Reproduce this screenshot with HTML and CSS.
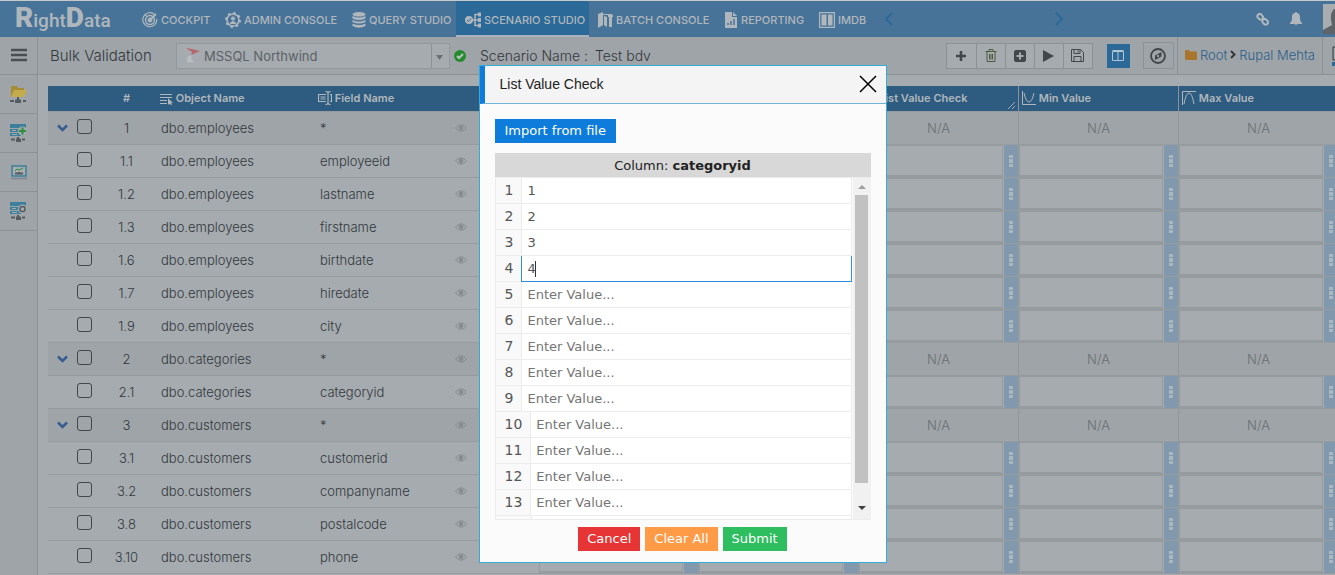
FILE: index.html
```html
<!DOCTYPE html>
<html lang="en">
<head>
<meta charset="utf-8">
<title>RightData - Bulk Validation</title>
<link rel="stylesheet" href="styles.css">
</head>
<body>
<header class="topbar">
  <div class="logo"><b>R</b><span>ight</span><b>D</b><span>ata</span></div>
  <nav class="nav">
    <a href="#"><svg width="16" height="16" viewBox="0 0 16 16" fill="none" stroke="currentColor"><path d="M13 3a7 7 0 1 0 1.8 4M3 2.500l1.500 1.500" stroke-width="1.200"/><circle cx="8" cy="8" r="4.500" stroke-width="1.400"/><circle cx="8" cy="8" r="2" fill="currentColor"/><path d="M8 8l6-6" stroke-width="1.800"/></svg>COCKPIT</a>
    <a href="#"><svg width="16" height="16" viewBox="0 0 16 16" fill="none" stroke="currentColor"><circle cx="8" cy="8" r="6" stroke-width="1.600"/><circle cx="8" cy="8" r="7" stroke-width="2" stroke-dasharray="2.500 3"/><circle cx="8" cy="6.500" r="1.600" fill="currentColor"/><path d="M5 11.500q3-4 6 0z" fill="currentColor"/></svg>ADMIN CONSOLE</a>
    <a href="#"><svg width="14" height="16" viewBox="0 0 14 16" fill="currentColor"><ellipse cx="7" cy="2.300" rx="6.500" ry="2.300"/><path d="M.5 4q6.500 3 13 0v2.500q-6.500 3-13 0zM.5 8q6.500 3 13 0v2q-6.500 3-13 0zM.5 11.500q6.500 3 13 0v2.500q-6.500 3.500-13 0z"/></svg>QUERY STUDIO</a>
    <a href="#" class="active"><svg width="16" height="16" viewBox="0 0 16 16" fill="none" stroke="currentColor"><circle cx="4" cy="8" r="4" fill="currentColor" stroke="none"/><path d="M2 8l1.500 1.500L6 6.500" stroke="#2b6998"/><path d="M8 8h6M14 2.500h-4v11h4" stroke-width="1.500"/><path d="M13 .5h3v4h-3zM13 6h3v4h-3zM13 11.500h3v4h-3z" fill="currentColor" stroke="none"/></svg>SCENARIO STUDIO</a>
    <a href="#"><svg width="15" height="16" viewBox="0 0 15 16" fill="currentColor"><path d="M0 2l5-2v13l-5 3zM6 4l3 1v10l-3-2zM10 3h5v2h-1v10h-3V5h-1z"/><path d="M5 2.500h9" stroke="currentColor"/></svg>BATCH CONSOLE</a>
    <a href="#"><svg width="14" height="16" viewBox="0 0 14 16"><path fill="currentColor" d="M1 0h7v5h5v11H1zM9 0l4 4H9z"/><path d="M4 13v-2M7 13V9M10 13V7" stroke="#487398" stroke-width="1.500"/></svg>REPORTING</a>
    <a href="#"><svg width="16" height="16" viewBox="0 0 16 16"><path fill="none" stroke="currentColor" stroke-width="1.200" d="M.6.600h14.800v14.800H.600z"/><path fill="currentColor" d="M2.500 2.500h5v11h-5zM9 2.500h4.500v11H9z"/></svg>IMDB</a>
  </nav>
  <button class="pager" aria-label="Previous"><svg width="8" height="14" viewBox="0 0 8 14"><path d="M7 1L1 7l6 6"/></svg></button>
  <button class="pager next" aria-label="Next"><svg width="8" height="14" viewBox="0 0 8 14"><path d="M1 1l6 6-6 6"/></svg></button>
  <div class="tools">
    <button aria-label="Links"><svg width="13" height="13" viewBox="0 0 13 13" fill="none" stroke="currentColor" stroke-width="2"><rect x="1" y="1.500" width="6" height="4.500" rx="2.200" transform="rotate(45 4 4)"/><rect x="6" y="6.500" width="6" height="4.500" rx="2.200" transform="rotate(45 9 9)"/></svg></button>
    <button aria-label="Notifications"><svg width="14" height="14" viewBox="0 0 14 14" fill="currentColor"><path d="M7 0c1 0 1 1 1 1 3 .5 3 3 3 5 0 3 1 4 2 5v1H1v-1c1-1 2-2 2-5 0-2 0-4.500 3-5 0 0 0-1 1-1zM5.500 12.500h3q-1.500 2-3 0z"/></svg></button>
    <span class="avatar"><svg width="30" height="30" viewBox="0 0 30 30"><path fill="#5d6367" d="M0 30v-4l9-5q-3-11 2-16h8v25z"/></svg></span>
  </div>
</header>

<div class="shell">
  <aside class="rail">
    <button class="menu" aria-label="Menu"><svg width="16" height="14" viewBox="0 0 16 14"><path d="M0 2h16M0 7h16M0 12h16" stroke="#4a4f53" stroke-width="2.500"/></svg></button>
    <button aria-label="Connections"><svg width="17" height="19" viewBox="0 0 17 19"><path fill="#a58c35" d="M1 1h6l1 2h6v8H1z"/><path fill="#c4ab4c" d="M4 5h13l-3 7H1z"/><path d="M0 16h4M13 16h3" stroke="#555b60" stroke-width="2"/><path fill="#555b60" d="M5 18v-3l2-1v-2h2v2l2 1v3z"/></svg></button>
    <button aria-label="Add source"><svg width="17" height="18" viewBox="0 0 17 18"><path fill="#3c809c" d="M0 0h16v4H0zM0 5h9v3H0zM0 9h11v3H0z"/><path d="M2 6.500h4M2 10.500h5" stroke="#a5abaf"/><circle cx="12.500" cy="7" r="4.500" fill="#a5abaf"/><path d="M12.500 3.500v7M9 7h7" stroke="#2d8e3c" stroke-width="2"/><path d="M1 15.500h4M12 15.500h3" stroke="#555b60" stroke-width="2"/><path fill="#555b60" d="M6 18v-3l1-1v-1h2v1l2 1v3z"/></svg></button>
    <button aria-label="Profile"><svg width="16" height="15" viewBox="0 0 16 15"><path d="M1 1h14v10H1z" fill="#a5abaf" stroke="#3c809c" stroke-width="1.500"/><path d="M0 13.500h16" stroke="#7d878d" stroke-width="1.500"/><path d="M4 6l2-2 2 1 4-2" stroke="#2d8e3c" fill="none"/><path d="M4 8.500h8M7 8h2" stroke="#555b60" stroke-width="2"/></svg></button>
    <button aria-label="Source settings"><svg width="17" height="18" viewBox="0 0 17 18"><path fill="#3c809c" d="M0 0h16v4H0zM0 5h9v3H0zM0 9h11v3H0z"/><path d="M2 6.500h4M2 10.500h5" stroke="#a5abaf"/><circle cx="12.500" cy="7" r="4.500" fill="#a5abaf"/><circle cx="12.500" cy="7" r="2.600" fill="none" stroke="#555b60" stroke-width="1.500"/><path d="M1 15.500h4M12 15.500h3" stroke="#555b60" stroke-width="2"/><path fill="#555b60" d="M6 18v-3l1-1v-1h2v1l2 1v3z"/></svg></button>
  </aside>

  <main class="main">
    <div class="toolbar">
      <h1>Bulk Validation</h1>
      <div class="source">
        <svg class="source-icon" width="16" height="16" viewBox="0 0 16 16"><path fill="#b5686c" d="M1 1l6 1 8 2-7 3-2 2 1-4z"/><path fill="#b9bdc0" d="M3 9l5-1-2 3 3 4-6 1q-2-3 0-7z"/></svg>
        <select aria-label="Data source"><option>MSSQL Northwind</option></select>
        <svg class="source-arrow" width="7" height="5" viewBox="0 0 7 5"><path fill="#6a7074" d="M0 0h7L3.500 5z"/></svg>
      </div>
      <svg class="ok" width="12" height="12" viewBox="0 0 12 12"><circle cx="6" cy="6" r="6" fill="#258b2f"/><path d="M3 6l2 2 4-4" fill="none" stroke="#b9c3bc" stroke-width="2"/></svg>
      <p class="scenario"><span>Scenario Name :</span><span>Test bdv</span></p>
      <div class="actions">
        <div class="group">
          <button aria-label="Add"><svg width="12" height="12" viewBox="0 0 12 12"><path d="M6 1v10M1 6h10" stroke="currentColor" stroke-width="2.500"/></svg></button>
          <button aria-label="Delete"><svg width="12" height="13" viewBox="0 0 12 13" fill="none" stroke="#4f5a40"><path d="M.5 2.500h11M4 2V.500h4V2M2 3v9.500h8V3M4.500 5v5.500M6 5v5.500M7.500 5v5.500"/></svg></button>
          <button aria-label="Add box"><svg width="12" height="12" viewBox="0 0 12 12"><rect width="12" height="12" rx="2" fill="currentColor"/><path d="M6 2.500v7M2.500 6h7" stroke="#a5abaf" stroke-width="2"/></svg></button>
          <button aria-label="Run"><svg width="11" height="12" viewBox="0 0 11 12"><path fill="currentColor" d="M0 0l11 6-11 6z"/></svg></button>
          <button aria-label="Save"><svg width="13" height="13" viewBox="0 0 13 13" fill="none" stroke="currentColor"><path d="M.5.500h9l3 3v9H.500zM3 .5v4h6v-4M3 12V7.500h7V12M7 1.500v2"/></svg></button>
        </div>
        <button class="split" aria-label="Columns"><svg width="12" height="11" viewBox="0 0 12 11"><path fill="none" stroke="#b3c3cf" d="M.5 1.500h11v9H.500zM6 1v9M.5.500h11"/></svg></button>
        <button class="compass" aria-label="Explore"><svg width="16" height="16" viewBox="0 0 16 16"><circle cx="8" cy="8" r="7" fill="none" stroke="currentColor" stroke-width="1.800"/><path fill="currentColor" fill-rule="evenodd" d="M11.500 4v4.500L5 12V7.500zM8 6.800a1.200 1.200 0 1 0 .01 0z"/></svg></button>
        <div class="crumbs">
          <svg width="12" height="10" viewBox="0 0 12 10"><path fill="#a9742b" d="M0 1q0-1 1-1h3l1 1.500h6q1 0 1 1V9q0 1-1 1H1q-1 0-1-1z"/></svg>
          <a href="#">Root</a>
          <svg width="6" height="9" viewBox="0 0 6 9"><path d="M1 1l3.500 3.500L1 8" fill="none" stroke="#33383c" stroke-width="2"/></svg>
          <a href="#">Rupal Mehta</a>
        </div>
        <button class="edge" aria-label="Display"><svg width="18" height="20" viewBox="0 0 18 20" fill="none"><path d="M1 1h17M1 1v13h17M4 4h14" stroke="#33383c"/><path d="M0 17h18M0 19h6" stroke="#2b6998" stroke-width="2"/></svg></button>
      </div>
    </div>

    <div class="grid-wrap">
      <table class="grid">
        <colgroup><col class="c-check"><col class="c-num"><col class="c-object"><col class="c-field"><col class="c-eye"><col class="c-gap"><col class="c-value" span="5"></colgroup>
        <thead>
          <tr>
            <th></th>
            <th class="num">#</th>
            <th class="object"><svg width="13" height="12" viewBox="0 0 13 12"><path d="M0 1.500h12M0 4.500h12M0 7.500h7M0 10.500h7" stroke="currentColor"/><path fill="currentColor" d="M8 5l5 5-2 .2 1 2-1 .5-1-2-2 1z"/></svg> Object Name</th>
            <th colspan="2"><svg width="14" height="14" viewBox="0 0 14 14" fill="none" stroke="currentColor"><path d="M8 3.500H.500v7H8M12 3.500h1.500v7H12M2.500 6h5M2.500 8h5M10 2v10M7.500.500Q10 .5 10 2q0-1.500 2.500-1.500M7.500 13.500q2.500 0 2.500-1.500 0 1.500 2.500 1.500" stroke-width="1.200"/></svg> Field Name</th>
            <th></th>
            <th class="value"></th>
            <th class="value"></th>
            <th class="value"><span class="pad">List Value Check</span><svg class="grip" width="9" height="9" viewBox="0 0 9 9"><path d="M1 8l7-7M5 8l3-3" stroke="#a5abaf"/></svg></th>
            <th class="value"><svg width="14" height="14" viewBox="0 0 14 14" fill="none" stroke="currentColor"><path d="M.5 0v13.500H14M2 2q2 9 5 9t5-9" /></svg> Min Value</th>
            <th class="value"><svg width="14" height="14" viewBox="0 0 14 14" fill="none" stroke="currentColor"><path d="M.5 14V.500H14M2 13Q4 2 7 2t5 11"/></svg> Max Value</th>
          </tr>
        </thead>
        <tbody id="rows"></tbody>
      </table>
    </div>
  </main>
</div>

<section class="modal" role="dialog" aria-labelledby="modal-title">
  <header class="modal-head">
    <h2 id="modal-title">List Value Check</h2>
    <button aria-label="Close"><svg width="18" height="18" viewBox="0 0 18 18"><path d="M1 1l16 16M17 1L1 17" stroke="#000" stroke-width="1.500"/></svg></button>
  </header>
  <div class="modal-body">
    <button class="btn import">Import from file</button>
    <div class="list-title">Column: <b>categoryid</b></div>
    <div class="list">
      <div class="entries" id="entries"></div>
      <div class="scrollbar">
        <svg width="8" height="5" viewBox="0 0 8 5"><path fill="#a0a0a0" d="M0 4h8L4 0z"/></svg>
        <div class="thumb"></div>
        <svg class="down" width="8" height="5" viewBox="0 0 8 5"><path fill="#404040" d="M0 0h8L4 4z"/></svg>
      </div>
    </div>
    <div class="buttons">
      <button class="btn cancel">Cancel</button>
      <button class="btn clear">Clear All</button>
      <button class="btn submit">Submit</button>
    </div>
  </div>
</section>
<script src="app.js"></script>
</body>
</html>
```

FILE: styles.css
```css
* { box-sizing: border-box; }
body {
  margin: 0;
  height: 100vh;
  overflow: hidden;
  display: flex;
  flex-direction: column;
  background: #a5abaf;
  color: #33383c;
  font: 300 13px/20px Inter, "Open Sans", sans-serif;
}
button { font: inherit; color: inherit; border: 0; background: none; padding: 0; display: flex; align-items: center; justify-content: center; }
a { color: inherit; text-decoration: none; }
svg { flex: none; }

.topbar {
  display: flex;
  flex: none;
  align-items: center;
  height: 37px;
  border-top: 1px solid #c6cacb;
  background: #487398;
  color: #b0b7bc;
}
.logo { display: flex; align-items: baseline; width: 133px; padding-left: 15px; font: 500 19px/36px Roboto, sans-serif; }
.logo b { font-size: 28px; font-weight: 900; }
.nav { display: grid; grid-template-columns: 83px 127px 113px 133px 126px 95px 65px; align-self: stretch; font-size: 11px; font-weight: 500; }
.nav a { display: flex; align-items: center; gap: 3px; padding: 2px 0 0 9px; white-space: nowrap; }
.nav .active { background: #2b6998; border-bottom: 2px solid #a9b2b8; padding-top: 4px; }
.pager { margin-left: 10px; }
.pager path { fill: none; stroke: #2b6998; stroke-width: 2; }
.pager.next { margin-left: 162px; }
.tools { display: flex; align-items: center; gap: 20px; margin-left: auto; }
.avatar { display: flex; width: 12px; height: 30px; overflow: hidden; background: #a9adb0; }

.shell { display: flex; flex: 1; min-height: 0; }
.rail { flex: none; width: 38px; border-right: 1px solid #8b9195; background: #9fa4a8; }
.rail button { width: 100%; height: 39px; border-bottom: 1px solid #8b9195; }
.rail .menu { height: 38px; padding-bottom: 2px; }

.main { flex: 1; min-width: 0; overflow: hidden; }
.toolbar { display: flex; align-items: center; height: 38px; padding-left: 12px; border-bottom: 1px solid #8b9195; background: #9fa4a8; }
h1 { margin: 0; width: 126px; font-size: 15px; font-weight: 300; white-space: nowrap; }
.source { position: relative; width: 274px; height: 26px; }
.source select { width: 100%; height: 100%; padding: 0 0 0 27px; border: 1px solid #92989c; border-radius: 0; background: linear-gradient(#8b9195, #8b9195) 254px 0 / 1px 100% no-repeat #a5abaf; color: #5c6266; font: inherit; font-size: 13px; font-weight: 400; appearance: none; }
.source-icon { position: absolute; left: 9px; top: 4px; }
.source-arrow { position: absolute; right: 7px; top: 12px; }
.ok { margin-left: 4px; }
.scenario { display: flex; gap: 7px; margin: 0 0 0 14px; font-size: 14px; white-space: nowrap; }
.actions { display: flex; align-items: center; align-self: stretch; margin-left: auto; color: #42474b; }
.group { display: flex; height: 26px; border: 1px solid #8b9195; background: #a5abaf; }
.group button { width: 29px; }
.group button + button { border-left: 1px solid #8b9195; }
.split { width: 23px; height: 24px; margin: 0 13px 0 14px; background: #2b6998; }
.compass { width: 31px; height: 27px; border: 1px solid #8b9195; }
.crumbs { display: flex; align-items: center; align-self: stretch; gap: 3px; margin-left: 3px; padding: 0 7px 2px; border: solid #8b9195; border-width: 0 1px; color: #2b5f88; font-size: 13px; white-space: nowrap; }
.edge { width: 12px; padding-left: 9px; justify-content: flex-start; overflow: hidden; }

.grid-wrap { padding: 11px 0 0 10px; overflow: hidden; }
.grid { width: 1291px; table-layout: fixed; border-collapse: separate; border-spacing: 0; }
.c-check { width: 53px; }
.c-num { width: 51px; }
.c-object { width: 166px; }
.c-field { width: 126px; }
.c-eye { width: 34px; }
.c-gap { width: 61px; }
.c-value { width: 160px; }
th { height: 26px; padding: 0 0 1px; border-bottom: 1px solid #959b9f; background: #2e5c80; color: #b0b7bc; font-size: 11px; font-weight: 600; line-height: 16px; text-align: left; white-space: nowrap; }
th svg { vertical-align: -3px; }
th.num, td.num { text-align: center; }
th.object { padding-left: 8px; }
th.value { position: relative; padding-left: 3px; border-right: 1px solid #8b9195; }
.pad { padding-left: 17px; }
.grip { position: absolute; right: 2px; bottom: 1px; }
td { height: 33px; padding: 0; border-bottom: 1px solid #959b9f; font-size: 13px; }
td.object { padding-left: 9px; }
td.field { padding-left: 2px; }
.parent td { background: #9fa4a8; }
.pick { display: flex; align-items: center; gap: 9px; padding-left: 9px; }
.pick svg { width: 11px; }
.pick input { appearance: none; width: 15px; height: 15px; margin: 0 0 3px; border: 1px solid #42474b; border-radius: 3px; }
.child .pick { padding-left: 29px; }
.eye { color: #868c90; }
.eye svg { display: block; margin: auto; }
td.na { border-right: 1px solid #8f959a; color: #6a7074; text-align: center; }
td.value { padding: 0; border-right: 1px solid #959b9f; }
.cell { display: flex; height: 32px; gap: 1px; }
.cell input { flex: 1; min-width: 0; border: 1px solid #959b9f; border-bottom-width: 2px; background: transparent; }
.cell button { width: 14px; background: #8299ad; }

.modal { position: absolute; left: calc(50% - 189px); top: 65px; width: 408px; border: 1px solid #31add8; background: #fbfbfb; color: #222; font: 400 13px/24px "DejaVu Sans", Verdana, sans-serif; }
.modal-head { display: flex; align-items: center; justify-content: space-between; height: 38px; padding: 0 9px 2px 15px; border-left: 5px solid #0d7cda; border-bottom: 1px solid #6db3dc; background: #f4f4f4; }
h2 { margin: 0; font: 400 14px/20px "Liberation Sans", Arial, sans-serif; }
.modal-body { padding: 15px; padding-bottom: 11px; }
.btn { height: 24px; padding: 0 9px; color: #fff; white-space: nowrap; }
.import { padding: 0 10px; margin-bottom: 10px; background: #0d7cda; }
.list-title { padding-top: 2px; background: #d8d8d8; line-height: 22px; text-align: center; }
.list { display: flex; height: 343px; overflow: hidden; border: 1px solid #ececec; border-right: 0; }
.entries { flex: 1; }
.entry { display: flex; height: 26px; }
.entry label { min-width: 25px; padding: 0 8px 0 9px; border-bottom: 1px solid #ececec; background: #f9f9f9; color: #555; font-size: 14px; line-height: 25px; }
.entry input { flex: 1; min-width: 0; padding: 0 5px; border: solid #ececec; border-width: 0 1px 1px; border-radius: 0; outline: 0; background: #fff; color: #555; font: inherit; }
.entry input::placeholder { color: #757575; opacity: 1; }
.entry .current { border-color: #2f8fdf; background: linear-gradient(#333, #333) 13px 5px / 1px 16px no-repeat #fff; caret-color: transparent; }
.entry.next label { min-width: 35px; }
.scrollbar { display: flex; flex-direction: column; align-items: center; width: 18px; margin-left: 1px; padding: 7px 0 8px; background: #f1f1f1; }
.thumb { width: 13px; height: 288px; margin-top: 5px; background: #c1c1c1; }
.down { margin-top: auto; }
.buttons { display: flex; justify-content: center; gap: 5px; margin-top: 7px; }
.cancel { background: #e73535; }
.clear { background: #ff9a47; }
.submit { background: #2ebd5f; }
```

FILE: app.js
```js
const rows = [
  ["1", "employees", "*"],
  ["1.1", "employees", "employeeid"],
  ["1.2", "employees", "lastname"],
  ["1.3", "employees", "firstname"],
  ["1.6", "employees", "birthdate"],
  ["1.7", "employees", "hiredate"],
  ["1.9", "employees", "city"],
  ["2", "categories", "*"],
  ["2.1", "categories", "categoryid"],
  ["3", "customers", "*"],
  ["3.1", "customers", "customerid"],
  ["3.2", "customers", "companyname"],
  ["3.8", "customers", "postalcode"],
  ["3.10", "customers", "phone"]
];
const chevron = '<svg width="11" height="8" viewBox="0 0 11 8"><path d="M1 1.500l4.500 4.500L10 1.500" fill="none" stroke="#365c90" stroke-width="2.500"/></svg>';
const eye = '<svg width="12" height="8" viewBox="0 0 12 8"><path d="M.5 4q5.500-6.500 11 0-5.500 6.500-11 0z" fill="none" stroke="currentColor"/><circle cx="6" cy="4" r="2.400" fill="currentColor"/></svg>';
const dots = '<svg width="4" height="12" viewBox="0 0 4 12"><path fill="#aab6c0" d="M0 0h4v3H0zM0 4h4v4H0zM0 9h4v3H0z"/></svg>';

document.getElementById("rows").innerHTML = rows.map(([num, table, field]) => {
  const parent = field === "*";
  const value = parent
    ? '<td class="na">N/A</td>'
    : `<td class="value"><div class="cell"><input type="text" aria-label="${field}"><button aria-label="Options">${dots}</button></div></td>`;
  return `<tr class="${parent ? "parent" : "child"}">
    <td><div class="pick">${parent ? chevron : ""}<input type="checkbox" aria-label="Select ${num}"></div></td>
    <td class="num">${num}</td><td class="object">dbo.${table}</td><td class="field">${field}</td>
    <td class="eye">${eye}</td><td></td>${value.repeat(5)}</tr>`;
}).join("");

const values = ["1", "2", "3", "4"];
document.getElementById("entries").innerHTML = Array.from({ length: 13 }, (_, i) =>
  `<div class="entry"><label for="v${i}">${i + 1}</label><input id="v${i}" type="text" placeholder="Enter Value..." value="${values[i] || ""}"${i === 3 ? ' class="current"' : ""}></div>`
).join("") + '<div class="entry next"><label for="v13"></label><input id="v13" type="text" aria-label="Value 14"></div>';
```
